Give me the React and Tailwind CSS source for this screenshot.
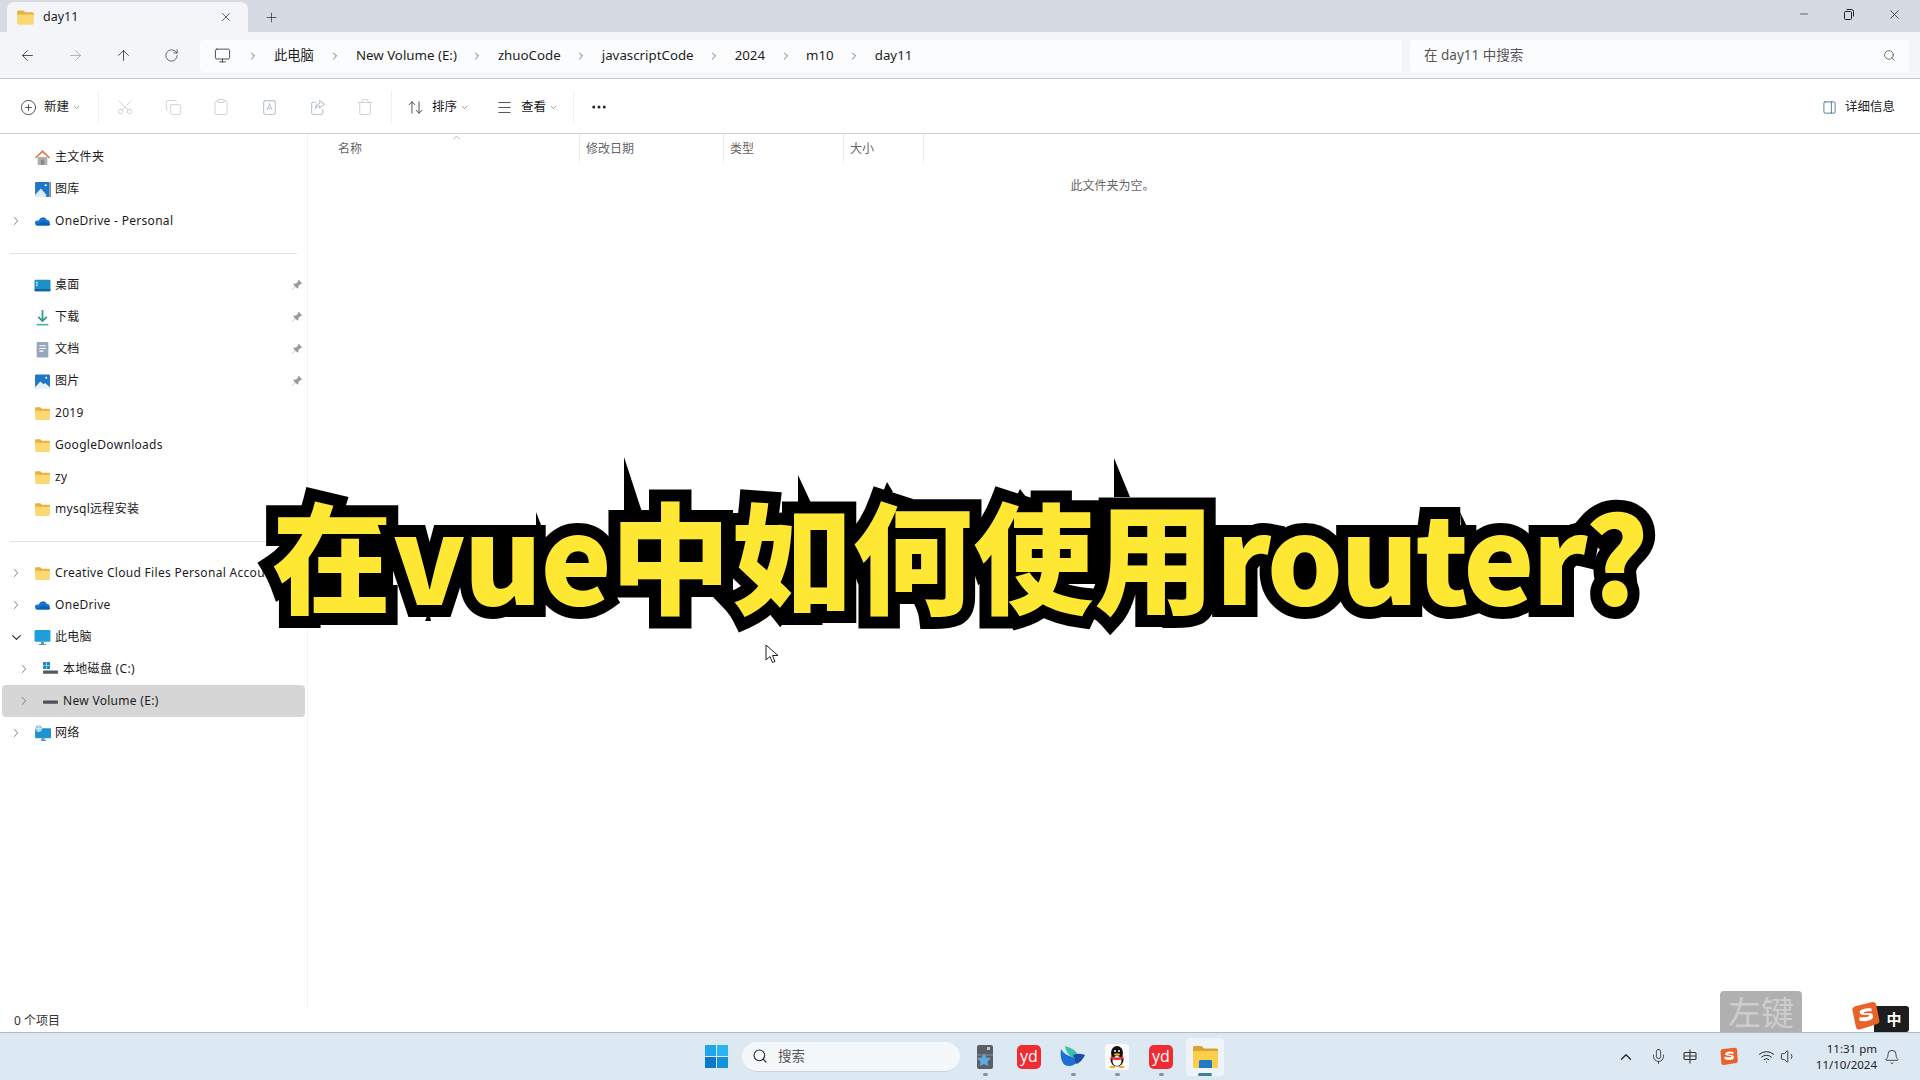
import React from "react";
import {
  ArrowLeft,
  ArrowRight,
  ArrowUp,
  ArrowUpDown,
  Bell,
  ChevronDown,
  ChevronRight,
  ChevronUp,
  CirclePlus,
  Clipboard,
  Copy,
  Ellipsis,
  Menu,
  Mic,
  Minus,
  Monitor,
  PanelRight,
  Plus,
  RotateCw,
  Scissors,
  Search,
  Trash,
  Volume1,
  Wifi,
  X,
} from "lucide-react";

function FolderIcon({ size = 17 }) {
  return (
    <svg width={size} height={size} viewBox="0 0 16 16">
      <path d="M1 3.2c0-.7.5-1.2 1.2-1.2h3.2c.4 0 .7.2 1 .4L7.6 3.5h6.2c.7 0 1.2.5 1.2 1.2v1.5H1z" fill="#e8b23c" />
      <path d="M1 5.5h14v7.3c0 .7-.5 1.2-1.2 1.2H2.2C1.5 14 1 13.500 1 12.800z" fill="#fbd873" />
    </svg>
  );
}

function HomeIcon() {
  return (
    <svg width="17" height="17" viewBox="0 0 16 16">
      <path d="M3.500 7.500h9V15h-9z" fill="#b3aeaa" />
      <path d="M6.500 10h3v5h-3z" fill="#8b8684" />
      <path d="M8 1 .8 8l1.100 1L8 3.200 14.100 9l1.100-1z" fill="#d9814a" />
    </svg>
  );
}

function GalleryIcon() {
  return (
    <svg width="17" height="17" viewBox="0 0 16 16">
      <rect x="1" y="1" width="13.500" height="14" rx="1" fill="#1f76c9" />
      <path d="M1 13 6.500 7l5 6v2H1z" fill="#dbeaf6" />
      <circle cx="11" cy="4" r="1" fill="#fff" />
      <path d="M14.500 1H16v14h-1.500z" fill="#7b8d9c" />
    </svg>
  );
}

function CloudIcon() {
  return (
    <svg width="17" height="17" viewBox="0 0 16 16">
      <path d="M4.500 7.200A4 4 0 0 1 12 6.400a3 3 0 0 1 1.800 5.400H3a2.400 2.400 0 0 1-.4-4.700c.6-.2 1.300-.1 1.900.1z" fill="#1573d1" />
      <path d="M3 11.800h10.800c.7 0 1.300-.4 1.700-1l-6-3-7.800 3.900c.4.100.9.100 1.300.1z" fill="#0f5fb3" />
    </svg>
  );
}

function DesktopIcon() {
  return (
    <svg width="17" height="17" viewBox="0 0 16 16">
      <rect x="0.500" y="2.500" width="15" height="11" rx="1" fill="#1b8fc7" />
      <path d="M.5 11.500h15v1c0 .6-.4 1-1 1h-13c-.6 0-1-.4-1-1z" fill="#0d5f96" />
      <path d="M2 4.500h1.500V6H2zM2 7h1.500v1.500H2z" fill="#dff2fb" />
    </svg>
  );
}

function DownloadIcon() {
  return (
    <svg width="17" height="17" viewBox="0 0 16 16">
      <path d="M7.200 1h1.600v8.500l2.700-2.700 1.100 1.100L8 12.500 3.400 7.900l1.100-1.100 2.700 2.700z" fill="#2c9a84" />
      <path d="M2.500 14h11v1.500h-11z" fill="#3fb3a1" />
    </svg>
  );
}

function DocIcon() {
  return (
    <svg width="17" height="17" viewBox="0 0 16 16">
      <rect x="2.500" y="1" width="11" height="14.500" rx="1" fill="#97a6bd" />
      <path d="M5 4h6v1H5zM5 6.500h6v1H5zM5 9h4v1H5z" fill="#fff" />
    </svg>
  );
}

function PictureIcon() {
  return (
    <svg width="17" height="17" viewBox="0 0 16 16">
      <rect x="1" y="1.500" width="14" height="13.500" rx="1" fill="#1e78c8" />
      <path d="M1 13.500 6 8l3 2.500 1.500-1 4.500 4V15H1z" fill="#e6f1fa" />
      <circle cx="11.500" cy="4.500" r="1" fill="#fff" />
    </svg>
  );
}

function PcIcon() {
  return (
    <svg width="17" height="17" viewBox="0 0 16 16">
      <rect x="0.500" y="1" width="15" height="11" rx="1.200" fill="#1d9fd8" />
      <path d="M6.500 12h3v2h-3zM4.500 14h7v1h-7z" fill="#5d95b5" />
    </svg>
  );
}

function DriveCIcon() {
  return (
    <svg width="17" height="17" viewBox="0 0 16 16">
      <path d="M1 1h3v3H1zM4.500 1h3v3h-3zM1 4.500h3v3H1zM4.500 4.500h3v3h-3z" fill="#1f86c0" />
      <rect x="1" y="9" width="14" height="3" rx="0.500" fill="#55595e" />
    </svg>
  );
}

function DriveIcon() {
  return (
    <svg width="17" height="17" viewBox="0 0 16 16">
      <rect x="1" y="7" width="14" height="3" rx="0.500" fill="#4d5054" />
    </svg>
  );
}

function NetworkIcon() {
  return (
    <svg width="17" height="17" viewBox="0 0 16 16">
      <rect x="1" y="3" width="15" height="9.500" rx="1" fill="#1d93cf" />
      <path d="M7 12.500h3v1.500h1.500v1h-5v-1H7z" fill="#5d95b5" />
      <circle cx="4.500" cy="3.500" r="3.200" fill="#8fc7e8" />
      <path d="M1.500 3.500h6M4.500.5v6" stroke="#fff" strokeWidth="0.600" />
    </svg>
  );
}

function RenameIcon() {
  return (
    <svg width="17" height="17" viewBox="0 0 16 16" fill="none" stroke="#b9c5cf" strokeWidth="1">
      <rect x="2.500" y="1.500" width="11" height="13" rx="2" />
      <path d="M5.500 10.500 8 4.500l2.500 6M6.300 8.700h3.400" />
    </svg>
  );
}

function ShareIcon() {
  return (
    <svg width="17" height="17" viewBox="0 0 16 16" fill="none" stroke="#b9c5cf" strokeWidth="1">
      <path d="M13 9.500v3.500a1.500 1.500 0 0 1-1.500 1.500H4A1.500 1.500 0 0 1 2.500 13V4.500A1.500 1.500 0 0 1 4 3h3" />
      <path d="M10 1.500 14.500 5 10 8.500V6.500c-2 0-3.500 1-4 3 0-3 1.500-5 4-5z" />
    </svg>
  );
}

function PinIcon() {
  return (
    <svg width="12" height="12" viewBox="0 0 12 12">
      <path d="M7.500.8 11.200 4.500l-1 .6-.8-.2-2 2 .1 2-.9.9-2-2L1.300 11 1 10.700l3.200-3.300-2-2 .9-.9 2 .1 2-2-.2-.8z" fill="#9a9a9a" />
    </svg>
  );
}

function SogouIcon({ size = 22 }) {
  return (
    <svg width={size} height={size} viewBox="0 0 24 24">
      <path d="M5 2.500 20 1c1.500-.1 2.600.9 2.800 2.300l.9 14c.1 1.500-.9 2.700-2.400 2.900L6 22.800c-1.500.2-2.800-.9-3-2.400L2 5.500C1.800 4 3.300 2.700 5 2.500z" fill="#e8622a" />
      <path d="M18.500 6.500c-3-1-6.500-1-9 0-2.500 1.200-2 3.700.5 4.200l5 .8c1 .2 1 1-.2 1.300-2 .5-5 .3-7.500-.7l-.6 3.200c3 1.200 7 1.400 9.800.5 3-1 3.300-4.800.3-5.400l-5-.9c-.8-.2-.7-.8.2-1 1.800-.4 4-.2 6 .5z" fill="#fff" />
    </svg>
  );
}

function YoudaoIcon() {
  return (
    <div className="w-6 h-6 rounded-[5px] bg-[#ee2c32] flex items-center justify-center text-white text-[16px] leading-none pb-[2px] font-['Open_Sans',sans-serif]">
      yd
    </div>
  );
}

function StickyIcon() {
  return (
    <svg width="18" height="26" viewBox="0 0 18 26">
      <rect x="1" y="1" width="16" height="24" rx="2" fill="#5a5f66" />
      <path d="M1 11h16" stroke="#8b9097" strokeWidth="1" />
      <path d="M8 9l2.200 4.400 4.800.7-3.500 3.400.8 4.800L8 20l-4.300 2.300.8-4.800L1 14.100l4.800-.7z" fill="#5fa8e0" />
      <path d="M11 3h3v3h-3z" fill="#c4c8cc" />
    </svg>
  );
}

function BirdIcon() {
  return (
    <svg width="26" height="24" viewBox="0 0 26 24">
      <path d="M1 4c3 5 7 7 12 8l4 5c-3 4-8 5-12 3-4-3-5-10-4-16z" fill="#1d6fd6" />
      <path d="M5 1c4 1 9 3 12 7l-3 5C9 11 6 7 5 1z" fill="#35c0b2" />
      <path d="M13 10c4-2 8-1 12 0-2 4-5 8-9 9z" fill="#1a4fa8" />
    </svg>
  );
}

function QQIcon() {
  return (
    <svg width="24" height="26" viewBox="0 0 24 26">
      <rect width="24" height="26" rx="4" fill="#fafafa" />
      <ellipse cx="12" cy="9" rx="6" ry="7" fill="#111" />
      <ellipse cx="12" cy="16" rx="6.500" ry="6.500" fill="#111" />
      <ellipse cx="12" cy="17" rx="4.500" ry="5" fill="#fff" />
      <path d="M6 12c4 2 8 2 12 0l.5 2.500c-4 2-9 2-13 0z" fill="#e0312d" />
      <ellipse cx="12" cy="10.500" rx="3" ry="1.200" fill="#f2b01e" />
      <circle cx="10" cy="7" r="1" fill="#fff" />
      <circle cx="14" cy="7" r="1" fill="#fff" />
      <ellipse cx="7.500" cy="23" rx="3" ry="1.300" fill="#f2b01e" />
      <ellipse cx="16.500" cy="23" rx="3" ry="1.300" fill="#f2b01e" />
    </svg>
  );
}

function ExplorerIcon() {
  return (
    <svg width="26" height="24" viewBox="0 0 26 24">
      <path d="M1 2.500C1 1.700 1.700 1 2.500 1h7l2.500 2.500h12.500c.8 0 1.500.7 1.500 1.500v3H1z" fill="#d9a32d" />
      <path d="M1 6h25v15.500c0 .8-.7 1.500-1.500 1.500h-22C1.700 23 1 22.300 1 21.500z" fill="#fbcf4c" />
      <path d="M7 16.500c0-.8.7-1.500 1.500-1.500h10c.8 0 1.500.7 1.500 1.500V23H7z" fill="#1f79c4" />
    </svg>
  );
}

const navTop = [
  { name: "主文件夹", icon: <HomeIcon /> },
  { name: "图库", icon: <GalleryIcon /> },
  { name: "OneDrive - Personal", icon: <CloudIcon />, arrow: "right" },
];

const navQuick = [
  { name: "桌面", icon: <DesktopIcon />, pin: true },
  { name: "下载", icon: <DownloadIcon />, pin: true },
  { name: "文档", icon: <DocIcon />, pin: true },
  { name: "图片", icon: <PictureIcon />, pin: true },
  { name: "2019", icon: <FolderIcon /> },
  { name: "GoogleDownloads", icon: <FolderIcon /> },
  { name: "zy", icon: <FolderIcon /> },
  { name: "mysql远程安装", icon: <FolderIcon /> },
];

const navDrives = [
  { name: "Creative Cloud Files Personal Account", icon: <FolderIcon />, arrow: "right" },
  { name: "OneDrive", icon: <CloudIcon />, arrow: "right" },
  { name: "此电脑", icon: <PcIcon />, arrow: "down" },
  { name: "本地磁盘 (C:)", icon: <DriveCIcon />, arrow: "right", nested: true },
  { name: "New Volume (E:)", icon: <DriveIcon />, arrow: "right", nested: true, active: true },
  { name: "网络", icon: <NetworkIcon />, arrow: "right" },
];

const crumbs = ["此电脑", "New Volume (E:)", "zhuoCode", "javascriptCode", "2024", "m10", "day11"];

function NavRow({ item }) {
  return (
    <div
      className={`h-8 mx-[2px] flex items-center rounded-[4px] ${item.nested ? "pl-2" : ""} ${item.active ? "bg-[#d6d6d6]" : ""}`}
    >
      <span className="w-7 shrink-0 flex justify-center">
        {item.arrow === "right" && <ChevronRight size={14} strokeWidth={1.6} className="text-[#777]" />}
        {item.arrow === "down" && <ChevronDown size={15} strokeWidth={2} className="text-[#333]" />}
      </span>
      <span className="w-[25px] shrink-0 flex justify-center">{item.icon}</span>
      <span className="text-[12px] tracking-[0.3px] text-[#1c1c1c] whitespace-nowrap overflow-hidden">{item.name}</span>
      {item.pin && (
        <span className="ml-auto mr-[2px]">
          <PinIcon />
        </span>
      )}
    </div>
  );
}

function Divider() {
  return (
    <div className="h-8 flex items-center px-[10px]">
      <div className="h-px w-full bg-[#e2e2e2]" />
    </div>
  );
}

function Sidebar() {
  return (
    <aside className="w-[308px] shrink-0 border-r border-[#f2f2f2] pt-[7px] overflow-hidden">
      {navTop.map((item) => (
        <NavRow key={item.name} item={item} />
      ))}
      <Divider />
      {navQuick.map((item) => (
        <NavRow key={item.name} item={item} />
      ))}
      <Divider />
      {navDrives.map((item) => (
        <NavRow key={item.name} item={item} />
      ))}
    </aside>
  );
}

function ToolIcon({ children }) {
  return <span className="w-12 flex justify-center text-[#b9c5cf]">{children}</span>;
}

function Sep() {
  return <span className="w-px h-8 bg-[#f1f1f1]" />;
}

function Toolbar() {
  return (
    <div className="h-[55px] shrink-0 pt-[2px] bg-white border-b border-[#cfcfcf] flex items-center pl-5 pr-[25px] text-[12.5px] text-[#1c1c1c]">
      <CirclePlus size={17} strokeWidth={1.2} className="text-[#333]" />
      <span className="ml-[7px]">新建</span>
      <ChevronDown size={9} className="ml-[3px] text-[#777]" />
      <span className="w-[17px]" />
      <Sep />
      <span className="w-[2px]" />
      <ToolIcon><Scissors size={18} strokeWidth={1} className="-rotate-90" /></ToolIcon>
      <ToolIcon><Copy size={17} strokeWidth={1} /></ToolIcon>
      <ToolIcon><Clipboard size={18} strokeWidth={1} /></ToolIcon>
      <ToolIcon><RenameIcon /></ToolIcon>
      <ToolIcon><ShareIcon /></ToolIcon>
      <ToolIcon><Trash size={18} strokeWidth={1} /></ToolIcon>
      <span className="w-[2px]" />
      <Sep />
      <span className="w-[15px]" />
      <ArrowUpDown size={17} strokeWidth={1.2} className="text-[#333]" />
      <span className="ml-2">排序</span>
      <ChevronDown size={9} className="ml-[3px] text-[#777]" />
      <span className="w-[27px]" />
      <Menu size={17} strokeWidth={1.2} className="text-[#333]" />
      <span className="ml-[8px]">查看</span>
      <ChevronDown size={9} className="ml-[3px] text-[#777]" />
      <span className="w-[15px]" />
      <Sep />
      <Ellipsis size={18} strokeWidth={2} className="ml-[16px] text-[#222]" />
      <PanelRight size={15} strokeWidth={1.2} className="ml-auto text-[#1a5f7a]" />
      <span className="ml-[8px]">详细信息</span>
    </div>
  );
}

function AddressBar() {
  return (
    <div className="h-[47px] shrink-0 pt-[1px] bg-[#f3f5f8] border-b border-[#c9c9c9] flex items-center pl-[3px] pr-[11px]">
      <span className="w-12 flex justify-center text-[#333]"><ArrowLeft size={17} strokeWidth={1.2} /></span>
      <span className="w-12 flex justify-center text-[#a9a9a9]"><ArrowRight size={17} strokeWidth={1.2} /></span>
      <span className="w-12 flex justify-center text-[#333]"><ArrowUp size={17} strokeWidth={1.2} /></span>
      <span className="w-12 flex justify-center text-[#333]"><RotateCw size={15} strokeWidth={1.2} /></span>
      <div className="ml-[5px] w-[1202px] h-8 rounded-[4px] bg-[#fbfcfd] flex items-center pl-[14px] text-[13.300px] text-[#1c1c1c]">
        <Monitor size={17} strokeWidth={1.2} className="text-[#333]" />
        {crumbs.map((c, i) => (
          <React.Fragment key={c}>
            <span className={`${i === 0 ? "w-[43px]" : i === 1 ? "w-[42px]" : "w-[41px]"} flex justify-center`}>
              <ChevronRight size={12} strokeWidth={1.5} className="text-[#444]" />
            </span>
            <span className="whitespace-nowrap">{c}</span>
          </React.Fragment>
        ))}
      </div>
      <div className="ml-2 flex-1 h-8 rounded-[4px] bg-[#fbfcfd] flex items-center justify-between pl-[14px] pr-[13px] text-[13.500px] text-[#555]">
        <span>在 day11 中搜索</span>
        <Search size={13} strokeWidth={1.5} className="text-[#555]" />
      </div>
    </div>
  );
}

function TitleBar() {
  return (
    <div className="h-8 shrink-0 bg-[#d6dbe3] flex items-end pl-[7px] pr-[2px]">
      <div className="w-[241px] h-[30px] bg-[#f3f5f8] rounded-t-[7px] flex items-center pl-[9px] pr-[15px]">
        <FolderIcon size={19} />
        <span className="ml-[8px] text-[12.500px] text-[#1c1c1c]">day11</span>
        <X size={14} strokeWidth={1.3} className="ml-auto text-[#333]" />
      </div>
      <span className="w-[46px] h-[30px] flex items-center justify-center text-[#333]">
        <Plus size={15} strokeWidth={1.2} />
      </span>
      <div className="ml-auto self-stretch flex text-[#222]">
        <span className="w-[45px] flex items-center justify-center pb-[4px]"><Minus size={12} strokeWidth={1.3} /></span>
        <span className="w-[45px] flex items-center justify-center pb-[4px]">
          <svg width="11" height="11" viewBox="0 0 11 11" fill="none" stroke="#222" strokeWidth="1">
            <rect x="1.500" y="2.500" width="7" height="8" rx="1" />
            <path d="M3.500 .5h5a2 2 0 0 1 2 2v5" />
          </svg>
        </span>
        <span className="w-[47px] flex items-center justify-center pb-[4px]"><X size={15} strokeWidth={1.2} /></span>
      </div>
    </div>
  );
}

function FileList() {
  return (
    <main className="flex-1 min-w-0">
      <div className="h-[29px] flex text-[12px] leading-[16px] text-[#666]">
        <div className="relative w-[272px] pl-[30px] pt-[7px] border-r border-[#ececec]">
          名称
          <ChevronUp size={11} strokeWidth={1} className="absolute left-[143px] -top-[2px] text-[#555]" />
        </div>
        <div className="w-[144px] pl-[6px] pt-[7px] border-r border-[#ececec]">修改日期</div>
        <div className="w-[120px] pl-[6px] pt-[7px] border-r border-[#ececec]">类型</div>
        <div className="w-[80px] pl-[6px] pt-[7px] border-r border-[#ececec]">大小</div>
      </div>
      <div className="pt-[15px] pr-[3px] text-center text-[12px] leading-[16px] text-[#666]">此文件夹为空。</div>
    </main>
  );
}

function TaskApp({ children, running, active }) {
  return (
    <div className="relative w-11 h-[38px] flex items-center justify-center">
      {active && <div className="absolute inset-y-0 inset-x-[3px] rounded-[4px] bg-[#eef4f9]" />}
      <div className="relative">{children}</div>
      {running && (
        <span
          className={`absolute bottom-0 h-[3px] rounded-full ${active ? "w-[14px] bg-[#3d7f95]" : "w-[5px] bg-[#8a949c]"}`}
        />
      )}
    </div>
  );
}

function Taskbar() {
  return (
    <div className="h-12 shrink-0 bg-[#dce9f3] border-t border-[#aebdc8] flex items-center pl-[705px] pr-[13px]">
      <svg width="23" height="23" viewBox="0 0 23 23">
        <path d="M0 0h11v11H0z" fill="#1ea5ea" />
        <path d="M12 0h11v11H12z" fill="#2bb4f2" />
        <path d="M0 12h11v11H0z" fill="#0d79c6" />
        <path d="M12 12h11v11H12z" fill="#1592dc" />
      </svg>
      <div className="ml-[14px] w-[218px] h-[30px] rounded-full bg-[#f4f8fb] border-b border-[#c8d3dc] flex items-center pl-[10px] text-[13.500px] text-[#555]">
        <Search size={16} strokeWidth={1.6} className="text-[#222]" />
        <span className="ml-[10px]">搜索</span>
      </div>
      <div className="ml-[3px] flex">
        <TaskApp running><StickyIcon /></TaskApp>
        <TaskApp><YoudaoIcon /></TaskApp>
        <TaskApp running><BirdIcon /></TaskApp>
        <TaskApp running><QQIcon /></TaskApp>
        <TaskApp running><YoudaoIcon /></TaskApp>
        <TaskApp running active><ExplorerIcon /></TaskApp>
      </div>
      <div className="ml-auto flex items-center text-[#222]">
        <span className="w-8 flex justify-center"><ChevronUp size={18} strokeWidth={1.6} /></span>
        <span className="w-8 flex justify-center"><Mic size={17} strokeWidth={1.1} /></span>
        <span className="w-8 flex justify-center">
          <svg width="14" height="15" viewBox="0 0 14 15" fill="none" stroke="#333" strokeWidth="1.100">
            <rect x="1" y="3.500" width="12" height="7" rx="1" />
            <path d="M7 .5v14M1 7h12" />
          </svg>
        </span>
        <span className="w-11 flex justify-center"><SogouIcon size={19} /></span>
        <span className="ml-[5px] w-[22px] flex justify-center"><Wifi size={17} strokeWidth={1.4} /></span>
        <span className="w-[22px] flex justify-center"><Volume1 size={17} strokeWidth={1.2} /></span>
        <div className="w-[78px] text-right text-[11.500px] leading-[16px] font-['Noto_Sans',sans-serif] text-[#222]">
          <div>11:31 pm</div>
          <div>11/10/2024</div>
        </div>
        <span className="w-[30px] flex justify-center"><Bell size={16} strokeWidth={1.2} /></span>
      </div>
    </div>
  );
}

export default function App() {
  return (
    <div className="relative w-full h-screen overflow-hidden flex flex-col bg-white font-['Noto_Sans','Noto_Sans_CJK_SC',sans-serif]">
      <TitleBar />
      <AddressBar />
      <Toolbar />
      <div className="flex-1 min-h-0 flex">
        <Sidebar />
        <FileList />
      </div>
      <div className="h-6 shrink-0 pl-[14px] pt-[1px] flex items-center text-[12px] text-[#333]">0 个项目</div>
      <Taskbar />

      {/* spikes from the caption's outline */}
      <svg className="absolute inset-0" width="1920" height="1080" viewBox="0 0 1920 1080">
        <g fill="#000">
          <path d="M624 457 V512 H642z" />
          <path d="M798 475 V505 H812z" />
          <path d="M536 512 V535 L546 538z" />
          <path d="M887 482 L883 492 H893z" />
          <path d="M1020 489 L1016 497 H1026z" />
          <path d="M1114 458 V497 H1130z" />
          <path d="M1460 512 L1463 548 L1472 537z" />
          <path d="M429 612 L425 621 H431z" />
        </g>
      </svg>

      {/* video caption over the window */}
      <div className="absolute left-[272px] top-[478px] whitespace-nowrap text-[120px] leading-[150px] font-black text-[#ffe833] font-['Noto_Sans_CJK_SC',sans-serif] [-webkit-text-stroke:24px_#000] [paint-order:stroke_fill]">
        <span className="tracking-[0.700px]">在</span>
        <span className="tracking-[-1.700px]">vue</span>
        <span className="tracking-[1px]">中如何使用</span>
        <span className="tracking-[-3px]">router?</span>
      </div>

      {/* mouse cursor */}
      <svg className="absolute left-[765px] top-[644px]" width="14" height="20" viewBox="0 0 14 20">
        <path d="M1 1v15l4-3.500 2.500 6 2.500-1-2.500-6H13z" fill="#fff" stroke="#222" strokeWidth="1" />
      </svg>

      {/* key press hint */}
      <div className="absolute left-[1720px] top-[991px] w-[82px] h-[41px] rounded-t-[4px] bg-[#b0b0b0] flex justify-center items-center pt-[6px] text-[33px] leading-none text-[#cdcdcd] font-['Liberation_Serif','Noto_Sans_CJK_SC',serif]">
        左键
      </div>

      {/* ime status */}
      <div className="absolute left-[1874px] top-[1006px] w-[35px] h-[26px] rounded-r-[3px] bg-[#1d1d1d] flex items-center justify-center pl-[5px] text-white text-[15px] font-bold">
        中
      </div>
      <div className="absolute left-[1851px] top-[1002px] -rotate-[8deg]">
        <SogouIcon size={28} />
      </div>
    </div>
  );
}
